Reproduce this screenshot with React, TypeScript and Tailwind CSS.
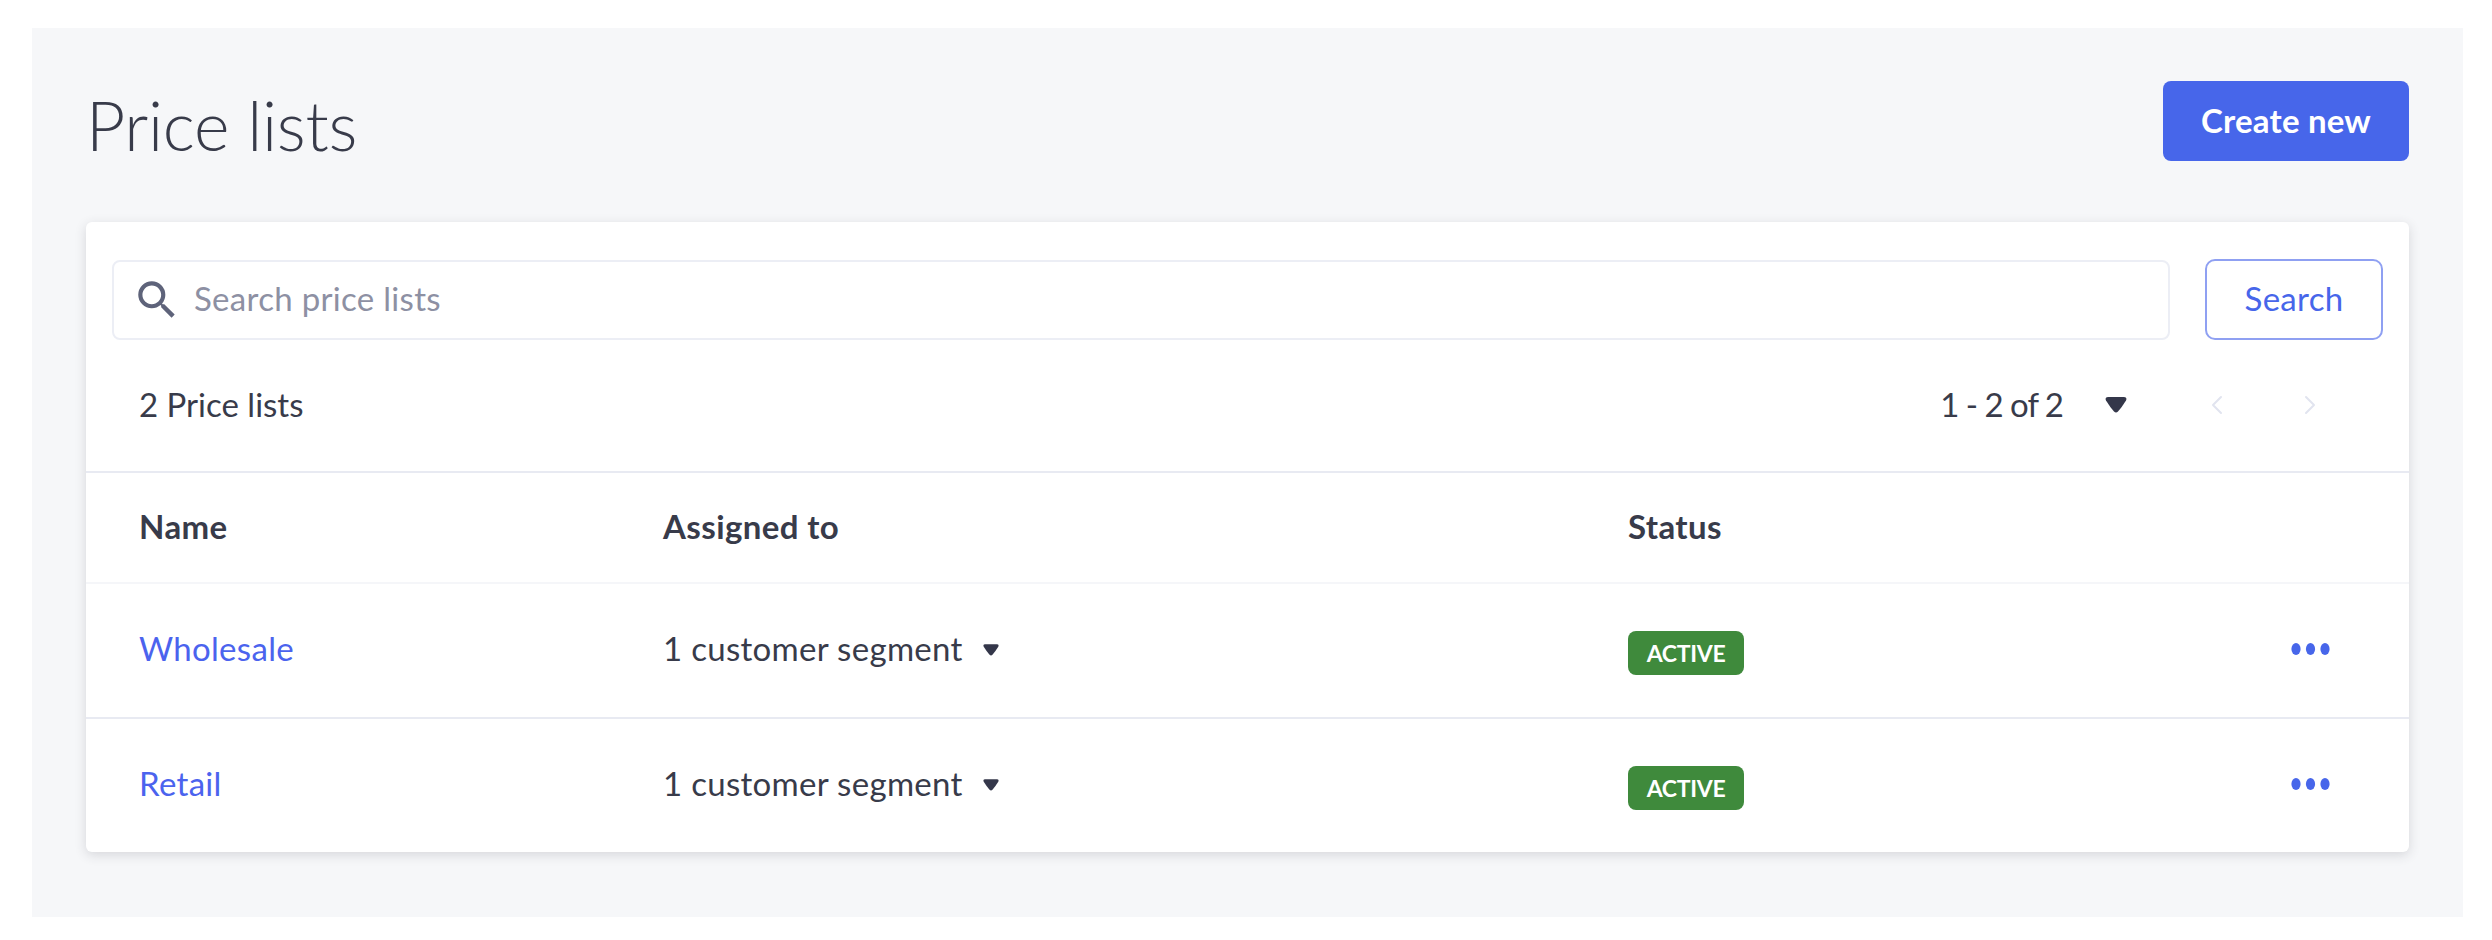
import React from 'react';
import { ChevronLeft, ChevronRight } from 'lucide-react';
import { MdSearch } from 'react-icons/md';

const rows = ['Wholesale', 'Retail'];

const Caret = ({ className }: { className: string }) => (
  <svg viewBox="0 0 22 16" className={className} fill="currentColor">
    <path d="M3 0 H19 Q22.5 0 21 3.5 Q17 10 13 14.5 Q11 16.5 9 14.5 Q5 10 1 3.5 Q-0.5 0 3 0 Z" />
  </svg>
);

const Dots = () => (
  <svg viewBox="0 0 39 14" className="w-[39px] h-[14px] text-[#4766ea]" fill="currentColor">
    <ellipse cx="5" cy="7" rx="4.6" ry="6" />
    <ellipse cx="19.5" cy="7" rx="4.6" ry="6" />
    <ellipse cx="34" cy="7" rx="4.6" ry="6" />
  </svg>
);

export default function App() {
  return (
    <div className="h-[940px] bg-white pt-[28px] pl-[32px] font-['Lato','Noto_Sans',sans-serif] text-[#383b4a]">
      <div className="w-[2431px] h-[889px] bg-[#f6f7f9] pl-[54px] pr-[54px]">
        {/* Header */}
        <div className="flex items-center justify-between h-[194px]">
          <h1 className="text-[68px] font-light tracking-[-0.3px] leading-none">Price lists</h1>
          <button className="w-[246px] h-[80px] mb-[8px] rounded-[8px] bg-[#4766ea] text-white text-[33px] font-bold tracking-[0.2px]">
            Create new
          </button>
        </div>

        {/* Card */}
        <div className="w-[2323px] bg-white rounded-[6px] shadow-[0_3px_12px_rgba(49,52,64,0.16)]">
          <div className="flex items-center gap-[35px] pt-[37px] pl-[26px] pr-[26px]">
            <div className="flex-1 h-[80px] flex items-center gap-[12px] pl-[18px] border-2 border-[#eceef5] rounded-[8px]">
              <MdSearch className="w-[50px] h-[50px] text-[#5e637a]" />
              <span className="text-[33px] text-[#8d90a3] tracking-[0.3px] mb-[2px]">Search price lists</span>
            </div>
            <button className="w-[178px] h-[81px] pb-[2px] border-2 border-[#8fa0f2] rounded-[10px] text-[33px] text-[#4766ea] tracking-[0.3px]">
              Search
            </button>
          </div>

          <div className="flex items-center justify-between h-[133px] pb-[2px] pl-[53px] pr-[83px] border-b-2 border-[#e8eaf2]">
            <span className="text-[33px]">2 Price lists</span>
            <div className="flex items-center">
              <span className="text-[33px] tracking-[-1px]">1 - 2 of 2</span>
              <Caret className="w-[22px] h-[16px] ml-[42px] mr-[74px] text-[#34374a]" />
              <ChevronLeft className="w-[32px] h-[32px] text-[#e1e4ef]" strokeWidth={1.5} />
              <ChevronRight className="w-[32px] h-[32px] ml-[61px] text-[#e1e4ef]" strokeWidth={1.5} />
            </div>
          </div>

          {/* Table */}
          <div className="grid grid-cols-[524px_965px_1fr] items-center h-[111px] pb-[1px] pl-[53px] border-b-2 border-[#f5f6f9] text-[33px] font-bold tracking-[0.4px]">
            <span>Name</span>
            <span>Assigned to</span>
            <span>Status</span>
          </div>
          {rows.map((name, i) => (
            <div
              key={name}
              className={`grid grid-cols-[524px_965px_1fr_auto] items-center pb-[4px] pl-[53px] pr-[79px] ${
                i === 0 ? 'h-[135px] border-b-2 border-[#e8eaf2]' : 'h-[133px]'
              }`}
            >
              <a className="text-[33px] text-[#4b63ee] tracking-[0.3px]">{name}</a>
              <div className="flex items-center text-[33px] tracking-[0.3px]">
                1 customer segment
                <Caret className="w-[16px] h-[12px] ml-[20px] mt-[3px] text-[#34374a]" />
              </div>
              <div>
                <span className="inline-flex items-center justify-center w-[116px] h-[44px] mt-[9px] rounded-[8px] bg-[#3f8a3c] text-white text-[23px] font-bold tracking-[-0.3px]">
                  ACTIVE
                </span>
              </div>
              <Dots />
            </div>
          ))}
        </div>
      </div>
    </div>
  );
}
